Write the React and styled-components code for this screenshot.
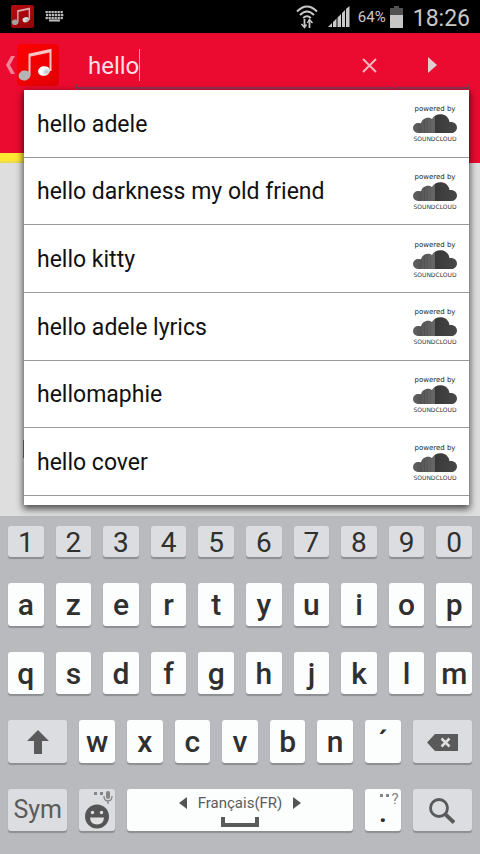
import React, { useState } from "react";
import styled, { createGlobalStyle } from "styled-components";

const GlobalStyle = createGlobalStyle`
  *, *::before, *::after { box-sizing: border-box; }
  body { margin: 0; background: #b9babe; font-family: Roboto, "Liberation Sans", sans-serif; }
  button, input { font: inherit; color: inherit; }
  button { padding: 0; border: 0; background: none; cursor: pointer; }
  ul { list-style: none; margin: 0; padding: 0; }
  svg { display: block; flex: none; }
`;

const Screen = styled.div`
  min-height: 100vh;
  display: flex;
  flex-direction: column;
  overflow: hidden;
`;

const StatusBar = styled.div`
  height: 33px;
  padding: 0 10px 0 11px;
  display: flex;
  align-items: center;
  background: #000;
  color: #c9c9c9;
`;

const StatusGroup = styled.div`
  display: flex;
  align-items: center;
  gap: ${(p) => p.$gap}px;
  margin-left: ${(p) => (p.$end ? "auto" : "0")};
`;

const Battery = styled.div`
  display: flex;
  align-items: center;
  gap: 4px;
  font-size: 15px;
  margin-left: -2px;
`;

const Clock = styled.time`
  font-size: 23px;
  line-height: 33px;
  padding-top: 3px;
`;

const AppBar = styled.header`
  height: 56px;
  display: flex;
  padding-right: 11px;
  background: #ec0b30;
  color: #fff;
`;

const HomeButton = styled.button`
  display: flex;
  align-items: center;
  gap: 2px;
  padding: 8px 0 0 6px;
  width: 76px;
`;

const FieldPlate = styled.div`
  display: flex;
  align-items: center;
  flex: ${(p) => (p.$grow ? "1" : "0 0 74px")};
  min-width: 0;
  justify-content: ${(p) => (p.$grow ? "flex-start" : "center")};
  padding: 8px 0 0 ${(p) => (p.$grow ? "12px" : "0")};
  margin-left: ${(p) => (p.$grow ? "0" : "1px")};
  background:
    linear-gradient(#8c3558, #8c3558) left bottom / 1px 5px no-repeat,
    linear-gradient(#8c3558, #8c3558) right bottom / 1px 5px no-repeat,
    linear-gradient(#8c3558, #8c3558) left bottom / 100% 2px no-repeat;
`;

const InputWrap = styled.label`
  flex: 1;
  min-width: 0;
  display: flex;
  align-items: center;
`;

const SearchInput = styled.input`
  field-sizing: content;
  min-width: 4px;
  padding: 2px 0 0;
  border: 0;
  outline: 0;
  background: none;
  color: #fbdfe4;
  font-size: 24px;
  height: 32px;
`;

const Caret = styled.span`
  width: 1px;
  height: 32px;
  background: #f6a0ae;
`;

const IconButton = styled.button`
  width: ${(p) => p.$width || 50}px;
  height: 40px;
  display: flex;
  align-items: center;
  justify-content: center;
`;

const Content = styled.main`
  flex: 1;
  display: grid;
  grid-template-rows: 1fr;
  grid-template-columns: minmax(0, 1fr);
  background: #dedede;
`;

const Backdrop = styled.div`
  grid-area: 1 / 1;
  display: flex;
  flex-direction: column;
`;

const TabStrip = styled.div`
  height: 74px;
  display: flex;
  align-items: flex-end;
  background: #ec0b30;
`;

const TabIndicator = styled.div`
  width: 33%;
  height: 10px;
  background: #ffe833;
  border-bottom: 2px solid #edd94a;
`;

const TrackMark = styled.div`
  width: 12px;
  height: 18px;
  margin: 277px 0 0 23px;
  background: #777;
`;

const Popup = styled.section`
  grid-area: 1 / 1;
  z-index: 1;
  align-self: start;
  margin: 1px 11px 11px 24px;
  padding-bottom: 9px;
  background: #fff;
  box-shadow: 0 3px 7px 1px rgba(0, 0, 0, 0.65);
`;

const Suggestions = styled.ul`
  display: grid;
  grid-template-rows: repeat(6, 1fr);
  height: 406px;
`;

const Suggestion = styled.li`
  display: flex;
  border-bottom: 1px solid #999;
`;

const SuggestionButton = styled.button`
  flex: 1;
  display: flex;
  align-items: center;
  justify-content: space-between;
  padding: 3px 12px 0 13px;
  color: #111;
  text-align: left;
  font-size: 23px;
  line-height: 28px;
`;

const Credit = styled.span`
  width: 44px;
  display: flex;
  flex-direction: column;
  align-items: center;
  color: #222;
  white-space: nowrap;
  font-family: "DejaVu Sans", sans-serif;
  font-size: 7px;
  line-height: 9px;
`;

const CreditName = styled.span`
  color: #333;
  font-size: 6px;
  line-height: 11px;
`;

const Keyboard = styled.section`
  padding: 10px 8px 23px;
  display: flex;
  flex-direction: column;
  gap: 26px;
  background: #b9babe;
`;

const NumberRow = styled.div`
  display: grid;
  grid-template-columns: repeat(10, minmax(0, 1fr));
  grid-auto-rows: 31px;
  gap: 12px;
`;

const LetterRows = styled.div`
  display: grid;
  grid-template-columns: repeat(20, minmax(0, 1fr));
  grid-template-rows: repeat(4, minmax(0, 1fr));
  height: 248px;
  gap: 26px 12px;
`;

const Key = styled.button`
  grid-column: span ${(p) => p.$span || 1};
  min-width: 0;
  padding-top: ${(p) => (p.$soft ? 0 : 2)}px;
  display: flex;
  flex-direction: column;
  align-items: center;
  justify-content: center;
  border-radius: 3px;
  background: ${(p) => (p.$muted ? "#dcdde0" : "#fcfdfd")};
  box-shadow: 0 2px 1px #8d8e92;
  color: ${(p) => (p.$soft ? "#5b5b5b" : "#303030")};
  font-size: ${(p) => p.$size || 30}px;
  font-weight: ${(p) => p.$weight || (p.$soft ? 400 : 500)};
  line-height: 32px;
`;

const SpaceLabel = styled.span`
  display: flex;
  align-items: center;
  gap: 11px;
  font-size: 15px;
  line-height: 20px;
  padding-bottom: 4px;
`;

const Hint = styled.span`
  align-self: flex-end;
  display: flex;
  gap: 2px;
  padding-right: 2px;
  color: #858585;
  font-size: 15px;
  font-weight: 400;
  line-height: 16px;
`;

const Dot = styled.span`
  line-height: 10px;
  padding-bottom: 14px;
`;

function MusicLogo({ size, dark }) {
  const id = dark ? "logo-dark" : "logo-bright";
  return (
    <svg width={size} height={size} viewBox="0 0 42 42" aria-hidden="true">
      <defs>
        <linearGradient id={id} x1="0" y1="0" x2="1" y2="1">
          <stop offset="0" stopColor={dark ? "#b80c10" : "#ff0000"} />
          <stop offset="1" stopColor={dark ? "#8e0508" : "#e00005"} />
        </linearGradient>
        <radialGradient id={id + "-note"} cx="0.7" cy="0.65" r="0.7">
          <stop offset="0" stopColor={dark ? "#aaa" : "#b4bcc2"} />
          <stop offset="0.6" stopColor={dark ? "#ddd" : "#fff"} />
        </radialGradient>
      </defs>
      <rect width="42" height="42" rx="4" fill={`url(#${id})`} />
      <path
        d="M12.500 31V10.500L33.500 6v21"
        fill="none"
        strokeWidth={dark ? 2.6 : 2}
        stroke={dark ? "#d8a8a8" : "#f8c4c4"}
      />
      <path d="M12.500 11.500L33.500 7" strokeWidth="2.400" stroke={dark ? "#d8a8a8" : "#f8c4c4"} />
      <ellipse cx="7.500" cy="31.500" rx="6" ry="5" transform="rotate(-12 7.500 31.500)" fill={dark ? "#a7a0a0" : "#b5b5b5"} />
      <ellipse cx="27" cy="27" rx="6" ry="4.800" transform="rotate(-12 27 27)" fill={`url(#${id}-note)`} />
    </svg>
  );
}

function KeyboardIcon() {
  return (
    <svg width="19" height="11" viewBox="0 0 19 11" aria-hidden="true" fill="#bdbdbd">
      {[0, 3, 6].map((y) =>
        [0, 3, 6, 9, 12, 15].map((x) => (
          <rect key={`${x}-${y}`} x={x + (y === 3 ? 1 : 0.5)} y={y} width="2.300" height="2.200" />
        ))
      )}
      <rect x="4" y="8.500" width="11" height="2" />
    </svg>
  );
}

function WifiIcon() {
  return (
    <svg width="22" height="24" viewBox="0 0 22 24" fill="none" stroke="#c9c9c9" aria-hidden="true">
      <path d="M1 6.500Q11-3.500 21 6.500M4 10Q11 3 18 10M7.200 13Q11 9.500 14.800 13" strokeWidth="2" />
      <path d="M8.500 14v8M13.500 23v-8" strokeWidth="1.800" />
      <path d="M5.500 19l3 3.500 2-3M11.500 18l2-3.500 3 3.500" strokeWidth="1.500" />
    </svg>
  );
}

function SignalIcon() {
  return (
    <svg width="22" height="21" viewBox="0 0 22 21" fill="#c9c9c9" aria-hidden="true">
      <path d="M0 21l4-4v4zM5 16l3.500-3.500V21H5zM9.500 11.500L13 8v13H9.500zM14 7l3-3v17h-3zM18 3l3.500-3v21H18z" />
    </svg>
  );
}

function BatteryIcon() {
  return (
    <svg width="13" height="22" viewBox="0 0 13 22" aria-hidden="true">
      <path d="M4 0h5v2h4v7H0V2h4z" fill="#515151" />
      <path d="M0 9h13v13H0z" fill="#c6c6c6" />
    </svg>
  );
}

function CloudIcon() {
  return (
    <svg width="44" height="19" viewBox="0 0 44 19" aria-hidden="true">
      <defs>
        <linearGradient id="cloud" x1="0" x2="1">
          <stop offset="0" stopColor="#606060" />
          <stop offset="0.250" stopColor="#505050" />
          <stop offset="0.500" stopColor="#666" />
          <stop offset="0.510" stopColor="#393939" />
          <stop offset="1" stopColor="#484848" />
        </linearGradient>
      </defs>
      <path
        fill="url(#cloud)"
        d="M5 19a5 5 0 0 1 0-10q1.500-.200 3 .300C9 4.500 15 2 19 5 22-1.500 35-2 36.500 8 41 7.500 44 10 44 13.500S41 19 38.500 19z"
      />
      <path d="M10 6v13M13 5v14M16 5v14M19 5v14" stroke="#777" strokeWidth="0.600" />
    </svg>
  );
}

function Triangle({ left, color = "#555", width = 8, height = 12 }) {
  return (
    <svg width={width} height={height} viewBox="0 0 8 12" preserveAspectRatio="none" aria-hidden="true">
      <path d={left ? "M8 0v12L0 6z" : "M0 0v12l8-6z"} fill={color} />
    </svg>
  );
}

function ShiftIcon() {
  return (
    <svg width="22" height="24" viewBox="0 0 22 24" aria-hidden="true">
      <path d="M11 0l11 11h-7v13H7V11H0z" fill="#5a5a5a" />
    </svg>
  );
}

function BackspaceIcon() {
  return (
    <svg width="31" height="17" viewBox="0 0 31 17" aria-hidden="true">
      <path d="M8 0h23v17H8L0 8.500z" fill="#5a5a5a" />
      <path d="M14.500 4.500l8 8m0-8l-8 8" stroke="#e0e0e0" strokeWidth="2.500" />
    </svg>
  );
}

function EmojiIcon() {
  return (
    <svg width="36" height="42" viewBox="0 0 36 42" aria-hidden="true">
      <circle cx="18" cy="26.500" r="12" fill="#555" />
      <circle cx="13.500" cy="22.500" r="1.700" fill="#e0e0e0" />
      <circle cx="22.500" cy="22.500" r="1.700" fill="#e0e0e0" />
      <path d="M11 27.500h14q-.500 7-7 7t-7-7z" fill="#e0e0e0" />
      <path d="M15 2h3v3h-3zM21 2h3v3h-3z" fill="#858585" />
      <rect x="27" y="1" width="4" height="8" rx="2" fill="#858585" />
      <path d="M25 6q0 5 4 5t4-5M29 11v3" fill="none" stroke="#858585" strokeWidth="1.300" />
    </svg>
  );
}

function SearchIcon() {
  return (
    <svg width="26" height="26" viewBox="0 0 26 26" fill="none" stroke="#5a5a5a" aria-hidden="true">
      <circle cx="10" cy="10" r="8.500" strokeWidth="2.800" />
      <path d="M16 16l9 8.500" strokeWidth="3.800" />
    </svg>
  );
}

const suggestions = [
  "hello adele",
  "hello darkness my old friend",
  "hello kitty",
  "hello adele lyrics",
  "hellomaphie",
  "hello cover",
];

export default function App() {
  const [query, setQuery] = useState("hello");
  const type = (char) => () => setQuery((q) => q + char);
  const letters = (chars) =>
    chars.split("").map((c) => (
      <Key key={c} $span={2} onClick={type(c)}>
        {c}
      </Key>
    ));

  return (
    <Screen>
      <GlobalStyle />
      <StatusBar>
        <StatusGroup $gap={11}>
          <MusicLogo size={23} dark />
          <KeyboardIcon />
        </StatusGroup>
        <StatusGroup $gap={10} $end>
          <WifiIcon />
          <SignalIcon />
          <Battery>
            64%
            <BatteryIcon />
          </Battery>
          <Clock>18:26</Clock>
        </StatusGroup>
      </StatusBar>

      <AppBar>
        <HomeButton aria-label="Back">
          <svg width="9" height="18" viewBox="0 0 9 18" aria-hidden="true">
            <path d="M5 0h4L4 9l5 9H5L0 9z" fill="#f48092" />
          </svg>
          <MusicLogo size={42} />
        </HomeButton>
        <FieldPlate $grow>
          <InputWrap>
            <SearchInput aria-label="Search" value={query} onChange={(e) => setQuery(e.target.value)} />
            <Caret />
          </InputWrap>
          <IconButton aria-label="Clear" onClick={() => setQuery("")}>
            <svg width="15" height="15" viewBox="0 0 15 15" aria-hidden="true">
              <path d="M1 1l13 13M14 1L1 14" stroke="#f7b4be" strokeWidth="2" />
            </svg>
          </IconButton>
        </FieldPlate>
        <FieldPlate>
          <IconButton aria-label="Submit search" $width={72}>
            <Triangle color="#e3cdd4" width={9} height={16} />
          </IconButton>
        </FieldPlate>
      </AppBar>

      <Content>
        <Backdrop>
          <TabStrip>
            <TabIndicator />
          </TabStrip>
          <TrackMark />
        </Backdrop>
        <Popup>
          <Suggestions>
            {suggestions.map((s) => (
              <Suggestion key={s}>
                <SuggestionButton onClick={() => setQuery(s)}>
                  {s}
                  <Credit>
                    powered by
                    <CloudIcon />
                    <CreditName>SOUNDCLOUD</CreditName>
                  </Credit>
                </SuggestionButton>
              </Suggestion>
            ))}
          </Suggestions>
        </Popup>
      </Content>

      <Keyboard>
        <NumberRow>
          {"1234567890".split("").map((n) => (
            <Key key={n} $muted $size={28} $weight={400} onClick={type(n)}>
              {n}
            </Key>
          ))}
        </NumberRow>
        <LetterRows>
          {letters("azertyuiop")}
          {letters("qsdfghjklm")}
          <Key $span={3} $muted aria-label="Shift">
            <ShiftIcon />
          </Key>
          {letters("wxcvbn´")}
          <Key $span={3} $muted aria-label="Backspace" onClick={() => setQuery((q) => q.slice(0, -1))}>
            <BackspaceIcon />
          </Key>
          <Key $span={3} $muted $soft $size={25}>
            Sym
          </Key>
          <Key $span={2} $muted aria-label="Emoji">
            <EmojiIcon />
          </Key>
          <Key $span={10} $soft onClick={type(" ")}>
            <SpaceLabel>
              <Triangle left />
              Français(FR)
              <Triangle />
            </SpaceLabel>
            <svg width="38" height="10" viewBox="0 0 38 10" aria-hidden="true">
              <path d="M2 0v8h34V0" fill="none" stroke="#5a5a5a" strokeWidth="4" />
            </svg>
          </Key>
          <Key $span={2} onClick={type(".")}>
            <Hint>
              <svg width="10" height="6" viewBox="0 0 10 6" aria-hidden="true">
                <path d="M0 3h3v3H0zM6 3h3v3H6z" fill="#858585" />
              </svg>
              ?
            </Hint>
            <Dot>.</Dot>
          </Key>
          <Key $span={3} $muted aria-label="Search">
            <SearchIcon />
          </Key>
        </LetterRows>
      </Keyboard>
    </Screen>
  );
}
